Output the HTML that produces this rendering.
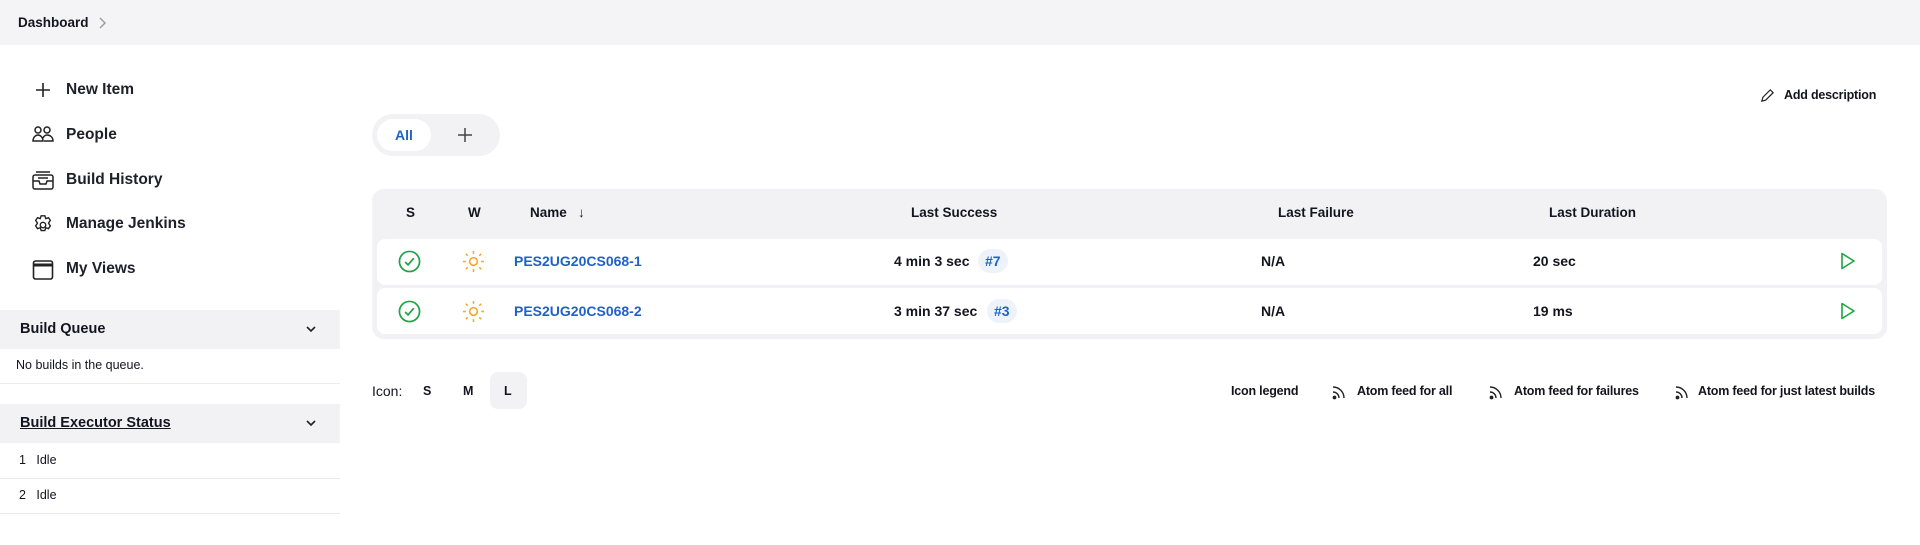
<!DOCTYPE html>
<html><head><meta charset="utf-8"><style>
*{box-sizing:border-box;margin:0;padding:0}
body{width:1920px;height:545px;background:#fff;font-family:"Liberation Sans",sans-serif;color:#14141f;position:relative;overflow:hidden}
.a{position:absolute;white-space:nowrap}
.hdr{left:0;top:0;width:1920px;height:45px;background:#f4f4f6}
.b{font-weight:bold}
.side{font-size:15.5px;font-weight:bold;color:#1f1f2a}
.sec{left:0;width:340px;background:#f2f2f5}
.line{left:0;width:340px;height:1px;background:#ececf0}
.th{font-size:13.5px;font-weight:bold;top:205px}
.td{font-size:14px;font-weight:bold}
.lnk{color:#1f62c5}
.badge{background:#eef3fb;color:#1f62c5;border-radius:12px;padding:4px 7px;font-size:14px;font-weight:bold}
.ft{font-size:12.5px;font-weight:bold;top:384px;letter-spacing:-0.2px}
</style></head><body>
<div class="a hdr"></div>
<div class="a b" style="left:18px;top:15px;font-size:13.5px">Dashboard</div>
<svg class="a" style="left:97px;top:17px" width="10" height="12" viewBox="0 0 10 12"><path d="M3 1l5 5-5 5" fill="none" stroke="#999" stroke-width="1.4"/></svg>

<svg class="a" style="left:35px;top:82px" width="16" height="16"><path d="M8 1v14M1 8h14" stroke="#222" stroke-width="1.6"/></svg>
<div class="a side" style="left:66px;top:81px">New Item</div>
<svg class="a" style="left:32px;top:125px" width="22" height="20" viewBox="0 0 22 20" fill="none" stroke="#222" stroke-width="1.5"><circle cx="6" cy="5" r="3"/><circle cx="15" cy="5" r="3"/><path d="M1 16c0-4 3-6 5-6s5 2 5 6zM11 13c1-2 2-3 4-3 3 0 6 2 6 6h-9"/></svg>
<div class="a side" style="left:66px;top:126px">People</div>
<svg class="a" style="left:32px;top:170px" width="22" height="20" viewBox="0 0 22 20" fill="none" stroke="#222" stroke-width="1.5"><rect x="1" y="5" width="20" height="14" rx="2"/><path d="M4 2h14M1 11h6l1 3h6l1-3h6M6 8h10"/></svg>
<div class="a side" style="left:66px;top:171px">Build History</div>
<svg class="a" style="left:32px;top:214px" width="22" height="22" viewBox="0 0 24 24" fill="none" stroke="#222" stroke-width="1.5"><path d="M10 2h4l1 3 3-1 2 3-2 3 2 3-2 3-3-1-1 3h-4l-1-3-3 1-2-3 2-3-2-3 2-3 3 1z"/><circle cx="12" cy="12" r="3"/></svg>
<div class="a side" style="left:66px;top:215px">Manage Jenkins</div>
<svg class="a" style="left:32px;top:259px" width="22" height="22" viewBox="0 0 22 22" fill="none" stroke="#222" stroke-width="1.6"><rect x="1.5" y="2" width="19" height="18" rx="2"/><path d="M1.5 6h19" stroke-width="3"/></svg>
<div class="a side" style="left:66px;top:260px">My Views</div>

<div class="a sec" style="top:310px;height:39px"></div>
<div class="a b" style="left:20px;top:321px;font-size:14.5px">Build Queue</div>
<svg class="a" style="left:305px;top:323px" width="12" height="12"><path d="M2 4l4 4 4-4" fill="none" stroke="#222" stroke-width="1.6"/></svg>
<div class="a" style="left:16px;top:358px;font-size:12.5px">No builds in the queue.</div>
<div class="a line" style="top:383px"></div>
<div class="a sec" style="top:404px;height:39px"></div>
<div class="a b" style="left:20px;top:415px;font-size:14.5px;text-decoration:underline">Build Executor Status</div>
<svg class="a" style="left:305px;top:417px" width="12" height="12"><path d="M2 4l4 4 4-4" fill="none" stroke="#222" stroke-width="1.6"/></svg>
<div class="a" style="left:19px;top:453px;font-size:12.5px">1&nbsp;&nbsp;&nbsp;Idle</div>
<div class="a line" style="top:478px"></div>
<div class="a" style="left:19px;top:488px;font-size:12.5px">2&nbsp;&nbsp;&nbsp;Idle</div>
<div class="a line" style="top:513px"></div>

<div class="a" style="left:372px;top:114px;width:128px;height:42px;border-radius:21px;background:#f2f2f5"></div>
<div class="a" style="left:377px;top:119px;width:54px;height:32px;border-radius:16px;background:#fff"></div>
<div class="a b lnk" style="left:395px;top:127px;font-size:14px">All</div>
<svg class="a" style="left:458px;top:128px" width="14" height="14"><path d="M7 0v14M0 7h14" stroke="#444" stroke-width="1.5"/></svg>

<svg class="a" style="left:1760px;top:88px" width="15" height="15" viewBox="0 0 16 16" fill="none" stroke="#222" stroke-width="1.3"><path d="M11 2l3 3-8 8-4 1 1-4z"/></svg>
<div class="a b" style="left:1784px;top:88px;font-size:12.5px;letter-spacing:-0.2px">Add description</div>

<div class="a" style="left:372px;top:189px;width:1515px;height:150px;border-radius:12px;background:#f2f2f5"></div>
<div class="a" style="left:377px;top:239px;width:1505px;height:46px;border-radius:8px;background:#fff"></div>
<div class="a" style="left:377px;top:288px;width:1505px;height:46px;border-radius:8px;background:#fff"></div>
<div class="a th" style="left:406px">S</div>
<div class="a th" style="left:468px">W</div>
<div class="a th" style="left:530px">Name&nbsp;&nbsp;&nbsp;↓</div>
<div class="a th" style="left:911px">Last Success</div>
<div class="a th" style="left:1278px">Last Failure</div>
<div class="a th" style="left:1549px">Last Duration</div>

<svg class="a" style="left:398px;top:250px" width="23" height="23" viewBox="0 0 24 24" fill="none" stroke="#1ea446" stroke-width="1.8"><circle cx="12" cy="12" r="10.5"/><path d="M7.5 12.5l3 3 6-7"/></svg>
<svg class="a" style="left:398px;top:300px" width="23" height="23" viewBox="0 0 24 24" fill="none" stroke="#1ea446" stroke-width="1.8"><circle cx="12" cy="12" r="10.5"/><path d="M7.5 12.5l3 3 6-7"/></svg>
<svg class="a" style="left:462px;top:250px" width="23" height="23" viewBox="0 0 24 24" fill="none" stroke="#f5a623" stroke-width="1.6"><circle cx="12" cy="12" r="4"/><path d="M12 1v3M12 20v3M1 12h3M20 12h3M4 4l2 2M18 18l2 2M4 20l2-2M18 6l2-2"/></svg>
<svg class="a" style="left:462px;top:300px" width="23" height="23" viewBox="0 0 24 24" fill="none" stroke="#f5a623" stroke-width="1.6"><circle cx="12" cy="12" r="4"/><path d="M12 1v3M12 20v3M1 12h3M20 12h3M4 4l2 2M18 18l2 2M4 20l2-2M18 6l2-2"/></svg>
<div class="a td lnk" style="left:514px;top:253px">PES2UG20CS068-1</div>
<div class="a td lnk" style="left:514px;top:303px">PES2UG20CS068-2</div>
<div class="a td" style="left:894px;top:253px">4 min 3 sec</div>
<div class="a badge" style="left:978px;top:249px">#7</div>
<div class="a td" style="left:894px;top:303px">3 min 37 sec</div>
<div class="a badge" style="left:987px;top:299px">#3</div>
<div class="a td" style="left:1261px;top:253px">N/A</div>
<div class="a td" style="left:1261px;top:303px">N/A</div>
<div class="a td" style="left:1533px;top:253px">20 sec</div>
<div class="a td" style="left:1533px;top:303px">19 ms</div>
<svg class="a" style="left:1840px;top:252px" width="16" height="18" viewBox="0 0 16 18" fill="none" stroke="#1ea446" stroke-width="1.6"><path d="M2 1.5l12 7.5-12 7.5z" stroke-linejoin="round"/></svg>
<svg class="a" style="left:1840px;top:302px" width="16" height="18" viewBox="0 0 16 18" fill="none" stroke="#1ea446" stroke-width="1.6"><path d="M2 1.5l12 7.5-12 7.5z" stroke-linejoin="round"/></svg>

<div class="a" style="left:372px;top:383px;font-size:14px">Icon:</div>
<div class="a ft" style="left:423px">S</div>
<div class="a ft" style="left:463px">M</div>
<div class="a" style="left:490px;top:372px;width:37px;height:37px;border-radius:8px;background:#f2f2f5"></div>
<div class="a ft" style="left:504px">L</div>
<div class="a ft" style="left:1231px">Icon legend</div>
<svg class="a" style="left:1332px;top:385px" width="14" height="15" viewBox="0 0 14 15" fill="none" stroke="#222" stroke-width="1.4"><circle cx="2.5" cy="12.5" r="1.2" fill="#222"/><path d="M1 7a6 6 0 016 6M1 2a11 11 0 0111 11"/></svg>
<div class="a ft" style="left:1357px">Atom feed for all</div>
<svg class="a" style="left:1489px;top:385px" width="14" height="15" viewBox="0 0 14 15" fill="none" stroke="#222" stroke-width="1.4"><circle cx="2.5" cy="12.5" r="1.2" fill="#222"/><path d="M1 7a6 6 0 016 6M1 2a11 11 0 0111 11"/></svg>
<div class="a ft" style="left:1514px">Atom feed for failures</div>
<svg class="a" style="left:1675px;top:385px" width="14" height="15" viewBox="0 0 14 15" fill="none" stroke="#222" stroke-width="1.4"><circle cx="2.5" cy="12.5" r="1.2" fill="#222"/><path d="M1 7a6 6 0 016 6M1 2a11 11 0 0111 11"/></svg>
<div class="a ft" style="left:1698px">Atom feed for just latest builds</div>
</body></html>
